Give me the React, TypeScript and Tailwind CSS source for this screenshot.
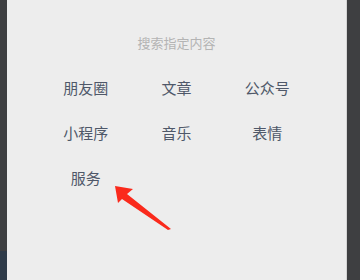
import React from "react";

const items = ["朋友圈", "文章", "公众号", "小程序", "音乐", "表情", "服务"];

export default function App() {
  return (
    <div
      className="relative flex h-[280px] w-[360px] overflow-hidden bg-[#ededed]"
      style={{ fontFamily: '"Noto Sans CJK SC", "Noto Sans", sans-serif' }}
    >
      <div className="flex w-[7px] flex-col">
        <div className="h-[251px] bg-[#3e3f41]" />
        <div className="flex-1 bg-[#2f3b49]" />
      </div>
      <div className="flex-1 pt-[33px]">
        <div className="h-[20px] text-center text-[13px] leading-[20px] text-[#b4b4b4]">
          搜索指定内容
        </div>
        <div className="mx-auto mt-[13px] grid w-[272px] grid-cols-3">
          {items.map((t) => (
            <div
              key={t}
              className="flex h-[45px] items-center justify-center text-[15px] text-[#4f5869]"
            >
              {t}
            </div>
          ))}
        </div>
      </div>
      <div className="w-[1px] bg-[#d4d4d4]" />
      <div className="w-[13px] bg-[#3e3f41]" />
      <svg
        className="absolute left-0 top-0"
        width="360"
        height="280"
        viewBox="0 0 360 280"
      >
        <polygon
          points="115,186 133,189 127,194 171,229 168,230 122,199 118,203"
          fill="#fa2a1c"
        />
      </svg>
    </div>
  );
}
